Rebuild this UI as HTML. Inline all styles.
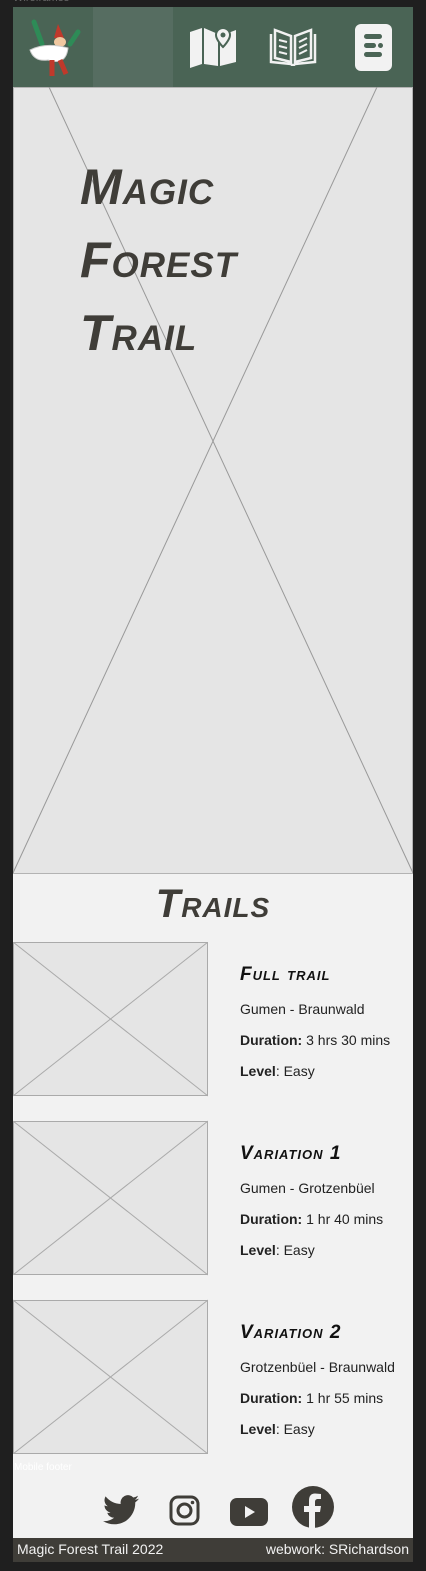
<!DOCTYPE html>
<html><head><style>
*{margin:0;padding:0;box-sizing:border-box}
body{width:426px;height:1571px;background:#1f1f1f;position:relative;overflow:hidden;font-family:"Liberation Sans",sans-serif}
.a{position:absolute}
.lbl{color:#666;font-size:11px}
.brush{font-family:"Liberation Sans",sans-serif;font-weight:bold;font-variant:small-caps;color:#3f3d38;font-style:italic;letter-spacing:1px}
.info{font-size:14px;color:#222}
.info p{position:absolute;left:240px;white-space:nowrap}
</style></head><body>
<div class="a lbl" style="left:13px;top:-8px">Wireframes</div>
<div class="a" style="left:13px;top:7px;width:400px;height:1555px;background:#f2f2f2"></div>
<div class="a" style="left:13px;top:7px;width:400px;height:80px;background:#4a6455"></div>
<div class="a" style="left:93px;top:7px;width:80px;height:80px;background:#566d61"></div>
<svg class="a" style="left:22px;top:14px" width="64" height="66" viewBox="0 0 64 66">
<path d="M12 8 L20 30 M48 30 L56 18" stroke="#2e8b57" stroke-width="5" stroke-linecap="round"/>
<path d="M36 10 L42 24 L32 24Z" fill="#c0392b"/>
<ellipse cx="38" cy="28" rx="6" ry="5" fill="#f0c8a0"/>
<path d="M8 36 Q24 28 46 34 Q44 52 26 46 Q12 48 8 36Z" fill="#fff" stroke="#ccc"/>
<path d="M30 46 L30 62 M38 46 L44 60" stroke="#c0392b" stroke-width="5"/>
</svg>
<svg class="a" style="left:189px;top:26px" width="48" height="42" viewBox="0 0 48 42">
<path d="M1 6 L13 2 L13 38 L1 42Z M15 2 L29 8 L29 40 L15 38Z M31 10 L47 4 L47 36 L31 40Z" fill="#f2f2f2"/>
<path d="M34 2 a7 7 0 0 1 7 7 c0 5 -7 12 -7 12 s-7 -7 -7 -12 a7 7 0 0 1 7 -7z" fill="#f2f2f2" stroke="#4a6455" stroke-width="2"/>
<circle cx="34" cy="9" r="2.5" fill="#4a6455"/>
</svg>
<svg class="a" style="left:269px;top:28px" width="48" height="38" viewBox="0 0 48 38">
<path d="M2 6 L2 34 L22 36 L24 38 L26 36 L46 34 L46 6" fill="none" stroke="#f2f2f2" stroke-width="2.5"/>
<path d="M6 2 L22 8 L22 34 L6 30Z M42 2 L26 8 L26 34 L42 30Z" fill="none" stroke="#f2f2f2" stroke-width="2.5"/>
<path d="M10 12 L18 14 M10 18 L18 20 M10 24 L18 26 M30 14 L38 10 M30 20 L38 16 M30 26 L38 22" stroke="#f2f2f2" stroke-width="2"/>
</svg>
<div class="a" style="left:355px;top:24px;width:37px;height:47px;background:#f2f2f2;border-radius:6px"></div>
<div class="a" style="left:364px;top:34px;width:18px;height:5px;background:#4a6455;border-radius:3px"></div>
<div class="a" style="left:364px;top:43px;width:12px;height:5px;background:#4a6455;border-radius:3px"></div>
<div class="a" style="left:378px;top:43px;width:5px;height:5px;background:#4a6455;border-radius:3px"></div>
<div class="a" style="left:364px;top:52px;width:18px;height:5px;background:#4a6455;border-radius:3px"></div>
<svg class="a" style="left:13px;top:87px" width="400" height="787"><rect x="0.5" y="0.5" width="399" height="786" fill="#e5e5e5" stroke="#b3b3b3"/><line x1="36" y1="0" x2="400" y2="786" stroke="#999"/><line x1="364" y1="0" x2="0" y2="786" stroke="#999"/></svg>
<div class="a brush" style="left:80px;top:151px;font-size:50px;line-height:73px">Magic<br>Forest<br>Trail</div>
<div class="a brush" style="left:0;width:426px;text-align:center;top:882px;font-size:40px">Trails</div>
<svg class="a" style="left:13px;top:942px" width="195" height="512">
<g fill="#e5e5e5" stroke="#aaa"><rect x=".5" y=".5" width="194" height="153"/><rect x=".5" y="179.5" width="194" height="153"/><rect x=".5" y="358.5" width="194" height="153"/></g>
<g stroke="#aaa"><line x1="0" y1="0" x2="195" y2="154"/><line x1="195" y1="0" x2="0" y2="154"/><line x1="0" y1="179" x2="195" y2="333"/><line x1="195" y1="179" x2="0" y2="333"/><line x1="0" y1="358" x2="195" y2="512"/><line x1="195" y1="358" x2="0" y2="512"/></g></svg>
<div class="info">
<p class="brush" style="top:964px;font-size:19px;color:#111">Full trail</p>
<p style="top:1001px">Gumen - Braunwald</p>
<p style="top:1032px"><b>Duration:</b> 3 hrs 30 mins</p>
<p style="top:1063px"><b>Level</b>: Easy</p>
<p class="brush" style="top:1143px;font-size:19px;color:#111">Variation 1</p>
<p style="top:1180px">Gumen - Grotzenbüel</p>
<p style="top:1211px"><b>Duration:</b> 1 hr 40 mins</p>
<p style="top:1242px"><b>Level</b>: Easy</p>
<p class="brush" style="top:1322px;font-size:19px;color:#111">Variation 2</p>
<p style="top:1359px">Grotzenbüel - Braunwald</p>
<p style="top:1390px"><b>Duration:</b> 1 hr 55 mins</p>
<p style="top:1421px"><b>Level</b>: Easy</p>
</div>
<div class="a" style="left:14px;top:1462px;font-size:10px;color:#fff">Mobile footer</div>
<svg class="a" style="left:103px;top:1495px" width="36" height="30" viewBox="0 0 24 20"><path d="M24 2.4a10 10 0 0 1-2.8.8A5 5 0 0 0 23.3.5a10 10 0 0 1-3.1 1.2A4.9 4.9 0 0 0 11.8 6 14 14 0 0 1 1.7.9a4.9 4.9 0 0 0 1.5 6.6A4.9 4.9 0 0 1 1 6.9a4.9 4.9 0 0 0 4 4.8 5 5 0 0 1-2.2.1 4.9 4.9 0 0 0 4.6 3.4A9.9 9.9 0 0 1 0 17.3 14 14 0 0 0 7.5 19.5c9 0 14-7.5 14-14v-.6A10 10 0 0 0 24 2.4z" fill="#3f3d38"/></svg>
<svg class="a" style="left:169px;top:1495px" width="31" height="31" viewBox="0 0 31 31"><rect x="2" y="2" width="27" height="27" rx="7" fill="none" stroke="#3f3d38" stroke-width="3"/><circle cx="15.5" cy="15.5" r="6.5" fill="none" stroke="#3f3d38" stroke-width="3"/><circle cx="23.5" cy="7.5" r="1.8" fill="#3f3d38"/></svg>
<svg class="a" style="left:230px;top:1498px" width="38" height="28" viewBox="0 0 38 28"><rect x="0" y="0" width="38" height="28" rx="7" fill="#3f3d38"/><path d="M15 8 L25 14 L15 20Z" fill="#f2f2f2"/></svg>
<svg class="a" style="left:292px;top:1486px" width="42" height="42" viewBox="0 0 42 42"><circle cx="21" cy="21" r="21" fill="#3f3d38"/><path d="M23 42 V26 H28 L29 20 H23 V16 C23 14 24 13 26 13 H29 V8 C27 8 25 7.5 23 7.5 C19 7.5 17 10 17 14.5 V20 H12 V26 H17 V42Z" fill="#f2f2f2"/></svg>
<div class="a" style="left:13px;top:1538px;width:400px;height:24px;background:#3f3d38;color:#f2f2f2;font-size:14px;line-height:22px;padding:0 4px;display:flex;justify-content:space-between"><span>Magic Forest Trail 2022</span><span>webwork: SRichardson</span></div>
</body></html>
